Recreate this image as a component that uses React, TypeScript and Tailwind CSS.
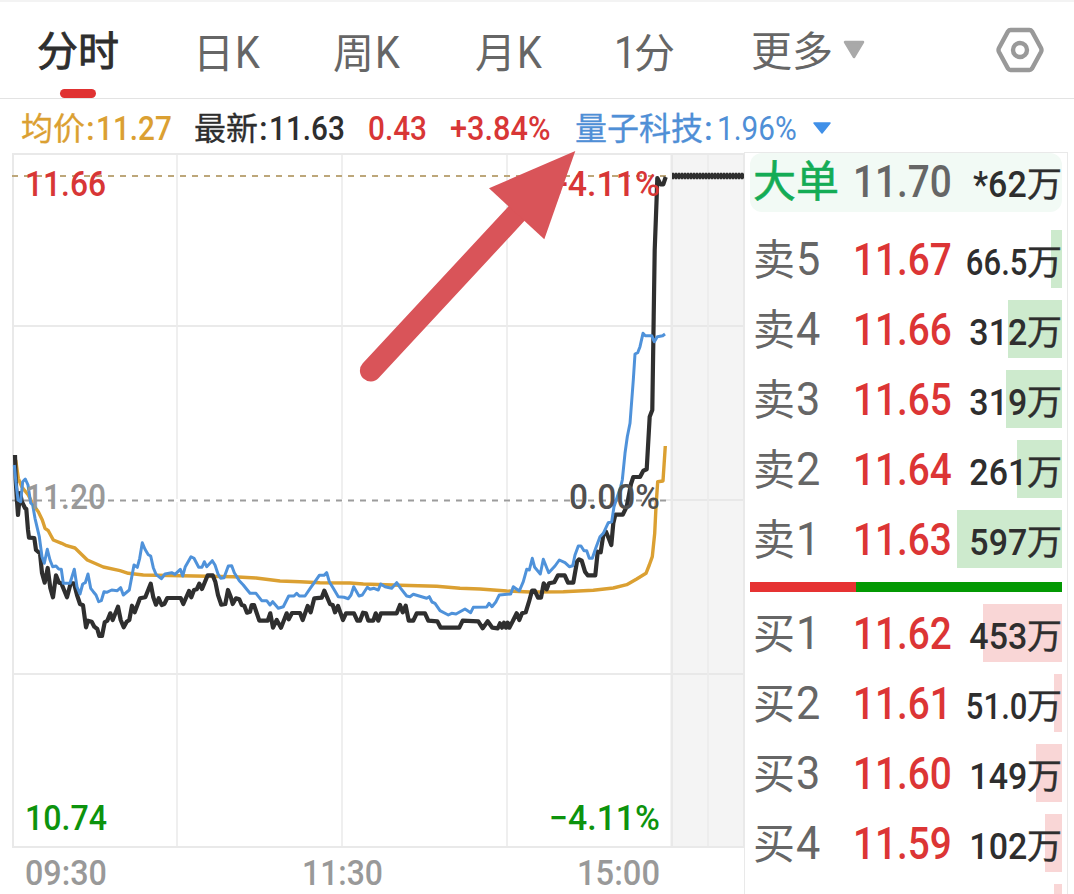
import clsx from 'clsx'

type Level = { label: string; no: string; price: string; volume: string; bar: number }

const ASKS: Level[] = [
  { label: '卖', no: '5', price: '11.67', volume: '66.5', bar: 11 },
  { label: '卖', no: '4', price: '11.66', volume: '312', bar: 54 },
  { label: '卖', no: '3', price: '11.65', volume: '319', bar: 56 },
  { label: '卖', no: '2', price: '11.64', volume: '261', bar: 45 },
  { label: '卖', no: '1', price: '11.63', volume: '597', bar: 105 },
]

const BIDS: Level[] = [
  { label: '买', no: '1', price: '11.62', volume: '453', bar: 79 },
  { label: '买', no: '2', price: '11.61', volume: '51.0', bar: 8 },
  { label: '买', no: '3', price: '11.60', volume: '149', bar: 26 },
  { label: '买', no: '4', price: '11.59', volume: '102', bar: 17 },
]

const PRICE_LINE =
  '15,455 15.7,480 16.7,497 18,515 20,493 22,502 25,508 26.3,509 28,530 29,537.7 34.3,538 36,550 40,553.3 42,573 44.7,582.7 47.7,568 50.3,588 53,597.3 56,575.3 59,582.7 61.3,583.3 67,597.3 70.7,583.3 74,583.3 77,595 80,604 83,605.3 86,627.3 88,620.7 91.7,621.7 94.3,626.7 97.3,629 99.3,636 102,636 104.7,622.3 107.3,620.7 110.3,613.3 112.7,620 118,606.7 120.7,620 123.7,627.3 126.7,621.7 129.3,620 132,605.7 134.7,612.3 140,598.3 145.3,597.3 150.7,583.7 153.3,597.3 156,604.7 158.7,598.3 161.7,605 164.3,604 167.3,598 180.7,598 183.3,604 189,591 191.3,597.3 194,590 196.7,589.3 199.3,583.7 202,589 207.7,575.3 212.7,575.3 215.3,581.7 218,595 221.3,604.7 225.3,604 228,590 230.7,596.7 232.7,604 236,598.3 239.3,599.3 241.7,605 244.3,605.7 247,612.7 250,611.7 251.7,605 254,605 259.3,620.7 267.7,620.7 270.3,613.3 273,627.7 276.7,620 281,627.7 286.7,613.3 288.7,619.3 292,613 300,613 302.7,620 307.7,606 310.7,612.3 314.3,598.3 321.7,597.7 324.3,590.7 330,604 332.7,605 335,612.3 338,606 343,620 346,613.3 354,613.3 357.3,620.7 360,620.7 363,612.7 366,613.3 368.3,620.7 373.3,620.7 375.7,613.3 378.3,620.7 381,613.3 396.7,613.3 400,605 402.7,612.3 405.7,605.7 408.7,620.7 413.3,620.7 416.7,613.3 425,613.3 428.3,620.7 437.3,621.3 440.7,627.7 459.3,627.7 462.7,620.7 478.3,621.3 482.7,628.3 487.7,621.3 492.3,627.7 497.7,628.3 500,623.3 502,627.7 504,622.7 506,627.7 507.7,622.7 509.3,627.7 512.7,621.3 516.7,613.3 519.3,620 522,613.3 525.7,612.3 529,601.7 532,590.7 534.7,590.7 538,597.7 541,597.7 543.7,583.3 546.7,589.3 549,583.3 554.3,582.3 558,575.3 564.7,575.3 568,582.7 573.3,582.7 577,561.7 579,559.3 581.7,560.7 585,571.7 587.7,575.3 595.3,575.3 597.7,551.7 600.7,552.3 603.3,535 606,531.7 608.7,538.3 611.3,545 613.3,523.3 615.3,514.7 622.7,514.7 626.7,506.7 631,484 633.3,477 640,477 643.3,470.7 646.7,469.3 649.7,416.7 652.3,410 653.7,316.7 654.7,250 656.7,196.7 657.3,178 660.5,184.3 663.3,184.3 665.7,177'

const SECTOR_LINE =
  '14.3,465 16,483 18,500 20.7,501.7 22.7,481.7 25.3,479 28,485 30.7,503 32.7,505 35,518.3 39.3,536.7 42,556.7 44.3,563.3 47.3,549.3 50,560 52.7,566.7 56,566 58.7,569 61.3,569.3 63.3,583.3 70,583.3 74.3,569.3 77,586.7 80,594 82.7,584 85.3,582.7 88,574 90.7,588.3 93.3,591.7 96,595 98.7,601.7 101.3,600.7 104,591.7 106.7,592.3 111.7,590 117.3,590.7 120.7,587.7 123.3,595 129.3,590 134,565 137.3,567.3 139.7,558.3 142.3,542.7 145,549.3 148.3,554.7 150.7,556 153.3,567.7 156,574.3 161.3,578.7 165,574 171.7,572.7 175,574.3 180.3,569.3 182.7,576 185.3,566.7 191,556.7 194,558.3 198.7,567.3 202,567.3 204.3,561.7 206.7,566.7 212.3,560.7 215,565 218,574 220.7,578.3 224,577.7 228.3,566 231.7,565.7 234.3,572.7 239.3,580.7 243.3,585 246.7,589.3 250,593.3 256,593.3 261.7,600.7 266.7,600.7 270,605 272.7,601.7 278.3,608.3 283.3,606.7 288.7,596 294,596 296.7,593.3 299.3,596 305,596 310.7,587.7 315,581.7 319.3,575.3 324,575.3 326.7,572.7 329.3,581.7 333.3,588.3 338.3,596.7 344,597.3 348.3,598.7 351,595 353.7,586.7 359,596 362.3,595 367.3,587.3 370,589.3 374,588.3 378.3,590 380.7,584 385,586.7 391.7,588.3 396.7,582.7 400.7,588.3 406.7,596 410,596.7 413.3,594.3 426.7,598.3 429.3,596.7 432,602 435,603.3 440,610.7 448.3,615 451.7,613.3 456,614 465,609 470.7,612.7 473.3,607.3 486.7,607 489,603.3 492,606.7 496,601.7 499.3,595 510.7,594 513.3,586.7 519.3,591 523.3,581.7 526.7,569.3 529.3,570 532.3,558.3 534.7,567.3 540.3,574 543.3,559.3 546,566 548.7,572.7 555,566 559.3,560 565,562.7 569.3,566.7 572.7,565.7 575,555 578.3,546 581,546 584,550.7 586.7,550.7 589.3,558.3 592.3,558.3 595.7,548.3 600,536.7 603.3,533.3 608.3,522.7 611.7,521.7 614,506.7 617.3,496.7 620.7,486.7 622.3,480 625,453.3 627.3,436.7 630,423.3 633.3,380 635,354 637.7,352.7 640,346.7 643,333.3 645.3,335.7 651.7,335.7 654.3,341.7 657.3,336.7 662.7,335.7 665,334'

const AVG_LINE =
  '15.7,460 18.3,478.3 21.7,486.7 28.3,495 33.3,505 38.3,511.7 42.3,520 45,528.3 48.3,530.7 53.3,540 61.7,543.3 66.7,545.7 75,548 87.3,560 103.3,567 120,570.7 128.3,573.3 143.3,575 233.3,576.7 256,578 280,581 300,581.7 320,582.7 350,583 363.3,584 400,585.3 436.7,586.3 460,588.3 480,589 506.7,591 530,592 563.3,591.7 593.3,590.3 613.3,588 626.7,584.7 636.7,579 646,573.3 649.3,565 652.3,556.7 654.7,533.3 656,506.7 657.7,481.7 663,481 665.3,446'

// text, left, baseline, width, colour
const AXIS_LABELS: [string, number, number, number, string][] = [
  ['11.66', 25, 196, 81, '#d83636'],
  ['+4.11%', 549, 196, 111, '#d83636'],
  ['11.20', 25, 509, 81, '#999999'],
  ['0.00%', 569, 509, 91, '#505050'],
  ['10.74', 25, 830, 82, '#0d930d'],
  ['−4.11%', 549, 830, 111, '#0d930d'],
  ['09:30', 25, 885, 82, '#999999'],
  ['11:30', 302, 885, 81, '#999999'],
  ['15:00', 577, 885, 83, '#999999'],
]

function Tab({ text, suffix, prefix, className }: { text: string; suffix?: string; prefix?: string; className: string }) {
  return (
    <div className={clsx('flex items-baseline shrink-0 whitespace-nowrap text-[41px] leading-[101px]', className)}>
      {prefix && (
        <span className="w-[20px] text-[45px]">
          <span className="inline-block origin-left scale-x-[0.88]">{prefix}</span>
        </span>
      )}
      {text}
      {suffix && <span className="ml-px inline-block origin-left scale-x-[0.88] text-[45px]">{suffix}</span>}
    </div>
  )
}

function Quote({ name, value, className, valueClass = 'scale-x-[0.9] font-medium' }: {
  name?: string
  value: string
  className: string
  valueClass?: string
}) {
  return (
    <div className={clsx('flex items-baseline shrink-0 whitespace-nowrap text-[32px] leading-[60px]', className)}>
      {name && (
        <>
          <span className="[-webkit-text-stroke:0.3px]">{name}</span>
          <span className="w-[11px] pl-px text-[33px] font-medium">:</span>
        </>
      )}
      <span className={clsx('inline-block origin-left text-[33px]', valueClass)}>{value}</span>
    </div>
  )
}

function Volume({ value }: { value: string }) {
  return (
    <span className="relative flex flex-1 items-baseline justify-end text-[#2e2e2e]">
      <span
        className={clsx(
          'inline-block origin-right text-[36.500px] font-medium',
          value.includes('.') ? 'scale-x-[0.85]' : 'scale-x-[0.93]'
        )}
      >
        {value}
      </span>
      <span className="text-[35px] [-webkit-text-stroke:0.4px]">万</span>
    </span>
  )
}

function LevelRow({ level, side }: { level: Level; side: 'ask' | 'bid' }) {
  return (
    <div className="relative flex items-baseline h-[58px] shrink-0 leading-[57px] whitespace-nowrap">
      <div
        className={clsx('absolute right-0 inset-y-0', side === 'ask' ? 'bg-[#cdeacd]' : 'bg-[#f9d6d6]')}
        style={{ width: level.bar }}
      />
      <span className="w-[46px] pl-[3px] text-[42px] text-[#666666]">{level.label}</span>
      <span className="relative w-[57px] text-[47px] text-[#666666]">
        <span className="inline-block origin-left scale-x-[0.92]">{level.no}</span>
      </span>
      <span className="relative w-[99px] text-[45px] font-medium text-[#dc3535]">
        <span className="inline-block origin-left scale-x-[0.86]">{level.price}</span>
      </span>
      <Volume value={level.volume} />
    </div>
  )
}

function Chart() {
  return (
    <svg className="relative block w-[744px] h-[742px] shrink-0 overflow-visible" viewBox="0 152 744 742" fill="none">
      <rect x="670" y="153" width="74" height="694" fill="#f4f4f4" />
      <path d="M13 326H744M13 500H744M13 674H744" stroke="#e4e4e4" strokeWidth="1.3" />
      <path d="M177 154V847M342 154V847M507 154V847M708 154V847" stroke="#ebebeb" strokeWidth="1.6" />
      <path d="M13 154H744V847H13ZM672 154V847" stroke="#e9e9e9" strokeWidth="2" />
      <path d="M12 176H666" stroke="#bda77a" strokeWidth="1.8" strokeDasharray="6 6" />
      <path d="M12 500.5H666" stroke="#fff" strokeWidth="3" />
      <path d="M12 500.5H666" stroke="#9c9c9c" strokeWidth="2" strokeDasharray="6 6" />
      <path d="M672 176H744" stroke="#2e2e2e" strokeWidth="5.2" />
      <path d="M672 176H744" stroke="#2e2e2e" strokeWidth="6.4" strokeDasharray="2.2 0.8" />

      <polyline points={AVG_LINE} stroke="#dba032" strokeWidth="3.4" strokeLinejoin="round" />
      <polyline points={PRICE_LINE} stroke="#2f2f2f" strokeWidth="4.2" strokeLinejoin="round" />
      <polyline points={SECTOR_LINE} stroke="#4f92da" strokeWidth="3" strokeLinejoin="round" />

      {AXIS_LABELS.map(([text, x, y, width, fill]) => (
        <text
          key={text}
          x={x}
          y={y}
          fill={fill}
          textLength={width}
          lengthAdjust="spacingAndGlyphs"
          className="text-[35px] font-medium"
        >
          {text}
        </text>
      ))}

      {/* pointer to the sector quote */}
      <path d="M370.7 370.7L518 212" stroke="#d95459" strokeWidth="21.6" strokeLinecap="round" />
      <path d="M575.3 151L489 188.3L544.3 239.3Z" fill="#d95459" />
    </svg>
  )
}

export default function App() {
  return (
    <div className="w-[1074px] h-[894px] overflow-hidden bg-white font-['Roboto','Noto_Sans_CJK_SC',sans-serif]">
      <header className="relative flex h-[99px] border-t-2 border-t-[#f3f3f3] border-b border-b-[#e3e3e3] text-[#666666]">
        <Tab text="分时" className="ml-[37px] w-[156px] text-[#2e2e2e] [-webkit-text-stroke:0.9px]" />
        <Tab text="日" suffix="K" className="w-[140px]" />
        <Tab text="周" suffix="K" className="w-[142px]" />
        <Tab text="月" suffix="K" className="w-[139px]" />
        <Tab text="分" prefix="1" className="w-[137px]" />
        <Tab text="更多" className="w-[92px]" />
        <svg className="mt-[38px] h-[20px] w-[22px] shrink-0" viewBox="0 0 22 20">
          <path d="M2 2H20L11 17Z" fill="#a9a9a9" stroke="#a9a9a9" strokeWidth="2.5" strokeLinejoin="round" />
        </svg>
        <svg className="ml-[130px] mt-[24px] h-[48px] w-[50px] shrink-0" viewBox="0 0 50 48" fill="none" stroke="#999999" strokeWidth="4.4">
          <path d="M15.5 4H34.5Q36 4 37 5.5L46 22Q47 24 46 26L37 42.5Q36 44 34.5 44H15.5Q14 44 13 42.5L4 26Q3 24 4 22L13 5.5Q14 4 15.5 4Z" />
          <circle cx="25" cy="24" r="7" />
        </svg>
        <div className="absolute left-[60px] bottom-0 h-[9px] w-[36px] rounded-full bg-[#e03232]" />
      </header>

      <div className="flex h-[53px]">
        <Quote name="均价" value="11.27" className="ml-[21px] w-[173px] text-[#dba032]" />
        <Quote name="最新" value="11.63" className="w-[174px] text-[#2e2e2e]" />
        <Quote value="0.43" className="w-[82px] text-[#d83636]" />
        <Quote value="+3.84%" className="w-[125px] text-[#d83636]" valueClass="scale-x-[0.93] font-medium" />
        <Quote name="量子科技" value="1.96%" className="w-[237px] text-[#4f8fd6]" valueClass="ml-[3px] scale-x-[0.9]" />
        <svg className="mt-[22px] h-[14px] w-[20px] shrink-0" viewBox="0 0 20 14">
          <path d="M2 2H18L10 12Z" fill="#4090e8" stroke="#4090e8" strokeWidth="1.5" strokeLinejoin="round" />
        </svg>
      </div>

      <main className="flex h-[742px]">
        <Chart />
        <section className="flex w-[324px] flex-col border border-b-0 border-[#e9e9e9] px-[5px]">
          <div className="flex h-[59px] shrink-0 items-baseline rounded-xl bg-[#f2faf5] leading-[57px] whitespace-nowrap">
            <span className="w-[103px] pl-[3px] text-[43px] text-[#14ac55] [-webkit-text-stroke:0.6px]">大单</span>
            <span className="w-[99px] text-[45px] font-medium text-[#666666]">
              <span className="inline-block origin-left scale-x-[0.86]">11.70</span>
            </span>
            <Volume value="*62" />
          </div>
          <div className="mt-[18px] flex shrink-0 flex-col gap-3">
            {ASKS.map(l => <LevelRow key={l.no} level={l} side="ask" />)}
          </div>
          <div className="mt-[14px] flex h-[10px] shrink-0">
            <div className="w-[106px] bg-[#e63232]" />
            <div className="flex-1 bg-[#039903]" />
          </div>
          <div className="mt-3 flex shrink-0 flex-col gap-3">
            {BIDS.map(l => <LevelRow key={l.no} level={l} side="bid" />)}
            <div className="h-[10px] w-[8px] self-end bg-[#f9d6d6]" />
          </div>
        </section>
      </main>
    </div>
  )
}
